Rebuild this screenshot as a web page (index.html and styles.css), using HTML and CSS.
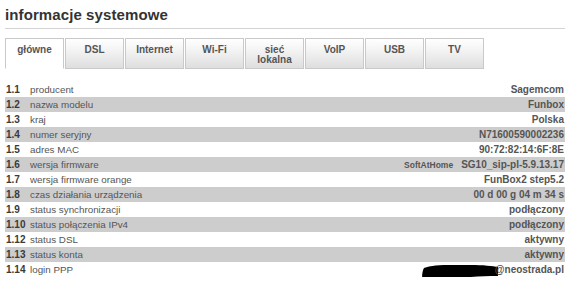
FILE: index.html
```html
<!DOCTYPE html>
<html lang="pl">
<head>
<meta charset="utf-8">
<link rel="stylesheet" href="styles.css">
</head>
<body>
<div class="page">
  <h1 class="title">informacje systemowe</h1>
  <div class="rule"></div>
  <nav class="tabs">
    <div class="tab active">główne</div>
    <div class="tab">DSL</div>
    <div class="tab">Internet</div>
    <div class="tab">Wi-Fi</div>
    <div class="tab">sieć<br>lokalna</div>
    <div class="tab">VoIP</div>
    <div class="tab">USB</div>
    <div class="tab">TV</div>
  </nav>
  <div class="rows">
    <div class="row"><span class="num">1.1</span><span class="label">producent</span><span class="val">Sagemcom</span></div>
    <div class="row alt"><span class="num">1.2</span><span class="label">nazwa modelu</span><span class="val">Funbox</span></div>
    <div class="row"><span class="num">1.3</span><span class="label">kraj</span><span class="val">Polska</span></div>
    <div class="row alt"><span class="num">1.4</span><span class="label">numer seryjny</span><span class="val">N71600590002236</span></div>
    <div class="row"><span class="num">1.5</span><span class="label">adres MAC</span><span class="val">90:72:82:14:6F:8E</span></div>
    <div class="row alt"><span class="num">1.6</span><span class="label">wersja firmware</span><span class="val"><span class="soft">SoftAtHome</span>SG10_sip-pl-5.9.13.17</span></div>
    <div class="row"><span class="num">1.7</span><span class="label">wersja firmware orange</span><span class="val">FunBox2 step5.2</span></div>
    <div class="row alt"><span class="num">1.8</span><span class="label">czas działania urządzenia</span><span class="val">00 d 00 g 04 m 34 s</span></div>
    <div class="row"><span class="num">1.9</span><span class="label">status synchronizacji</span><span class="val">podłączony</span></div>
    <div class="row alt"><span class="num">1.10</span><span class="label">status połączenia IPv4</span><span class="val">podłączony</span></div>
    <div class="row"><span class="num">1.12</span><span class="label">status DSL</span><span class="val">aktywny</span></div>
    <div class="row alt"><span class="num">1.13</span><span class="label">status konta</span><span class="val">aktywny</span></div>
    <div class="row"><span class="num">1.14</span><span class="label">login PPP</span><span class="val"><svg class="blot" width="78" height="22" viewBox="0 0 78 22"><path d="M3,5 C12,1 30,2 50,2 C62,2 72,3 77,4 L77,13 C60,13 42,14 28,17 C18,20 8,22 3,20 C0,18 1,8 3,5 Z" fill="#000"/></svg><span class="mail">@neostrada.pl</span></span></div>
  </div>
</div>
</body>
</html>
```
FILE: styles.css
```css
html, body {
  margin: 0;
  padding: 0;
  background: #fff;
}
body {
  font-family: "Liberation Sans", Arial, sans-serif;
  color: #555;
}
.page {
  width: 560px;
  padding: 6px 0 0 5px;
}
.title {
  margin: 0;
  font-size: 15px;
  line-height: 18px;
  font-weight: bold;
  color: #333;
  letter-spacing: 0.1px;
}
.rule {
  margin-top: 4px;
  border-top: 1px solid #d3d3d3;
}
.tabs {
  display: flex;
  gap: 1px;
  margin-top: 9px;
}
.tab {
  box-sizing: border-box;
  width: 59px;
  height: 31px;
  border: 1px solid #c9c9c9;
  background: linear-gradient(#ffffff, #f3f3f3 40%, #dedede);
  font-size: 10px;
  line-height: 10px;
  font-weight: bold;
  color: #555;
  text-align: center;
  padding-top: 6px;
}
.tab.active {
  background: #fff;
  border-bottom-color: #fff;
}
.rows {
  margin-top: 13px;
}
.row {
  display: flex;
  align-items: center;
  height: 15px;
  font-size: 10px;
  line-height: 12px;
}
.row.alt {
  background: #cdcdcd;
}
.num {
  width: 24px;
  padding-left: 1px;
  font-weight: bold;
  color: #3a3a3a;
  flex: none;
}
.label {
  flex: 1;
  font-size: 9.8px;
  color: #555;
}
.val {
  display: flex;
  align-items: center;
  font-weight: bold;
  color: #555;
  padding-right: 1px;
  white-space: pre;
}
.soft {
  font-size: 8.5px;
  margin-right: 8px;
}
.blot {
  flex: none;
  margin: -7px -4px -7px 0;
  position: relative;
  top: 4px;
}
.mail {
  position: relative;
}
```
